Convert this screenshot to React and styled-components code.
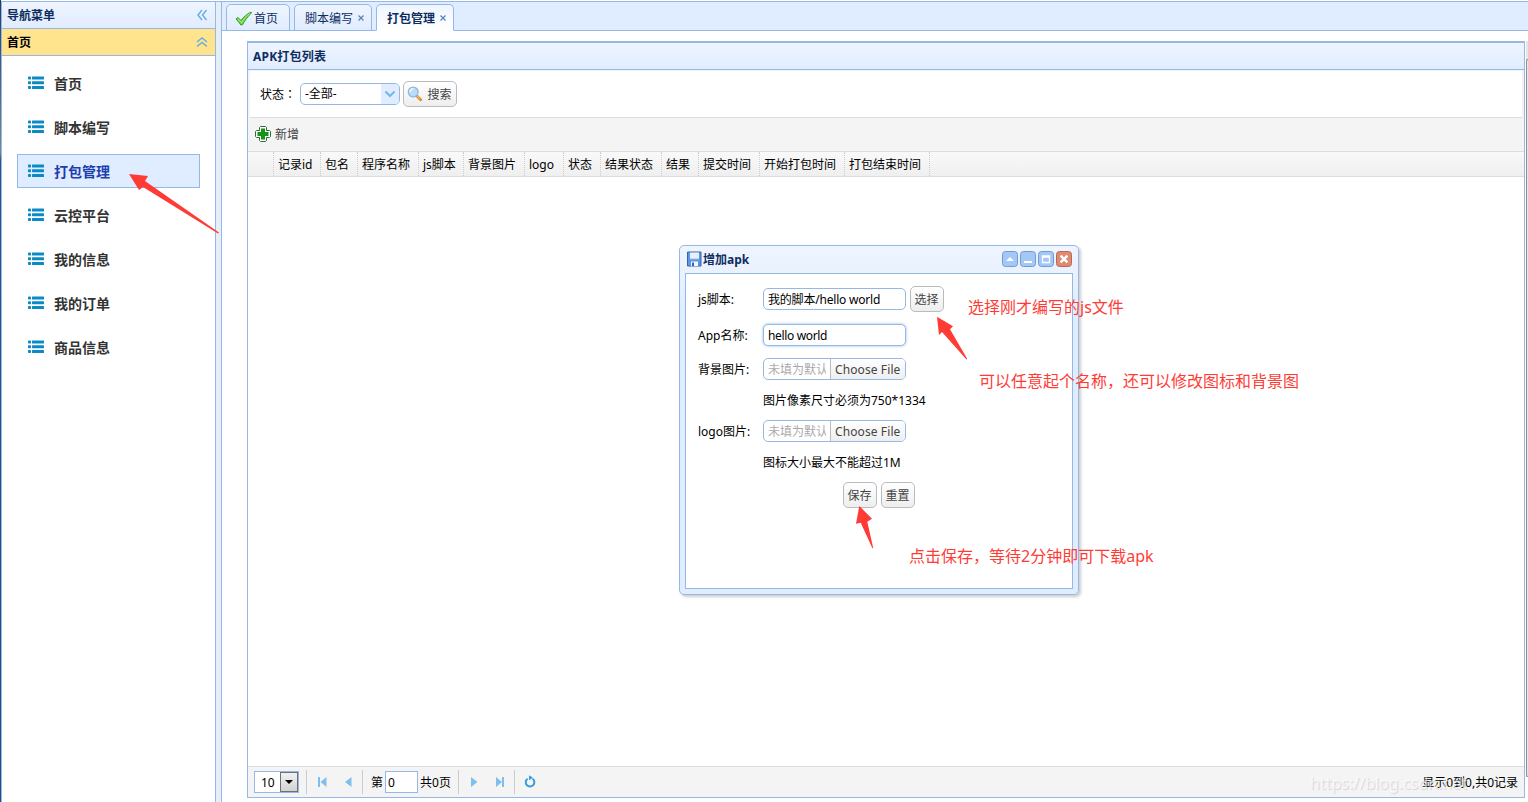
import React from 'react';
import styled, { createGlobalStyle, css } from 'styled-components';

const line = '#95b8e7';
const navy = '#0e2d5f';

const GlobalStyle = createGlobalStyle`
  * {
    box-sizing: border-box;
  }

  body {
    margin: 0;
    overflow: hidden;
    background: #fff;
  }

  body,
  input,
  button,
  select {
    font-family: 'Noto Sans', 'Noto Sans CJK SC', sans-serif;
    font-size: 12px;
    line-height: 16px;
    color: #000;
  }
`;

const Page = styled.div`
  position: relative;
  width: 1528px;
  height: 802px;
  padding-top: 1px;
  display: flex;
  overflow: hidden;
  white-space: nowrap;
`;

const DesktopEdge = styled.div`
  width: 1px;
  margin-top: -1px;
  background: linear-gradient(#1f3e63, #7d8791 19%, #2d5580 20%, #274d78);
`;

const Sidebar = styled.nav`
  width: 215px;
  border: 1px solid ${line};
  border-bottom: 0;
`;

const BarHeader = styled.div`
  display: flex;
  align-items: center;
  justify-content: space-between;
  height: 27px;
  padding: 1px 7px 0 5px;
  font-weight: bold;
  color: ${({ $active }) => ($active ? '#000' : navy)};
  background: ${({ $active }) => ($active ? '#ffe48d' : 'linear-gradient(#eff5ff, #e0ecff)')};
  border-bottom: 1px solid ${line};

  svg {
    margin-top: -1px;
  }
`;

const Menu = styled.ul`
  margin: 0;
  padding: 10px 15px;
  list-style: none;
  display: grid;
  gap: 10px;
`;

const MenuItem = styled.li`
  display: flex;
  align-items: center;
  gap: 10px;
  height: 34px;
  padding: 1px 0 0 10px;
  border: 1px solid transparent;
  font-size: 14px;
  font-weight: bold;
  color: #333;

  ${({ $active }) =>
    $active &&
    css`
      color: #1b3fae;
      background: #e0ecff;
      border-color: ${line};
    `}

  svg {
    margin-top: -1px;
  }
`;

const Splitter = styled.div`
  width: 5px;
  background: #e6eef8;
  border-top: 1px solid ${line};
`;

const Center = styled.main`
  flex: 1;
  display: flex;
  flex-direction: column;
  border: solid ${line};
  border-width: 1px 0 0 1px;
`;

const TabBar = styled.div`
  display: flex;
  gap: 4px;
  height: 29px;
  padding: 2px 0 0 4px;
  background: #e0ecff;
  border-bottom: 1px solid ${line};
`;

const Tab = styled.div`
  display: flex;
  align-items: center;
  gap: 1px;
  width: ${({ $width }) => $width}px;
  height: 27px;
  padding: 2px 0 0 ${({ $icon }) => ($icon ? 8 : 10)}px;
  border: 1px solid ${line};
  border-radius: 5px 5px 0 0;
  color: ${navy};
  background: linear-gradient(#eff5ff, #e0ecff);

  ${({ $active }) =>
    $active &&
    css`
      font-weight: bold;
      border-bottom-color: #fff;
      background: linear-gradient(#eff5ff, #fff);
    `}
`;

const TabClose = styled.svg`
  margin: -1px 0 0 4px;
`;

const Workspace = styled.div`
  flex: 1;
  display: flex;
  padding: 10px 0 4px 25px;
`;

const Panel = styled.section`
  flex: 1;
  display: flex;
  flex-direction: column;
  border: 1px solid ${line};
  border-top-width: 2px;
`;

const PanelTitle = styled.header`
  height: 27px;
  padding: 6px 5px;
  font-weight: bold;
  letter-spacing: 0.2px;
  color: ${navy};
  background: linear-gradient(#eff5ff, #e0ecff);
  border-bottom: 1px solid ${line};
`;

const SearchBar = styled.div`
  display: flex;
  align-items: center;
  height: 48px;
  padding: 0 0 1px 10px;
  border: solid #f3f3f3;
  border-width: 1px 2px 0 2px;
  box-shadow: inset 0 -1px #ddd;
`;

const SearchLabel = styled.span`
  width: 40px;
  padding-top: 1px;
  font-family: 'Noto Sans', 'Noto Sans CJK TC', sans-serif;
`;

const Combo = styled.div`
  display: flex;
  align-items: center;
  justify-content: space-between;
  width: 100px;
  height: 22px;
  margin-right: 3px;
  padding-left: 4px;
  border: 1px solid ${line};
  border-radius: 5px;
  overflow: hidden;
`;

const ComboArrow = styled.span`
  display: grid;
  place-items: center;
  width: 18px;
  height: 20px;
  background: #e0ecff;
`;

const Button = styled.button`
  display: flex;
  align-items: center;
  justify-content: center;
  gap: 4px;
  width: ${({ $width = 34 }) => $width}px;
  height: 26px;
  padding: 1px 1px 0 0;
  color: #444;
  background: linear-gradient(#fff, #eee);
  border: 1px solid #bbb;
  border-radius: 5px;

  svg {
    margin-top: -2px;
  }
`;

const Toolbar = styled.div`
  display: flex;
  align-items: center;
  gap: 4px;
  height: 34px;
  padding: 0 7px;
  color: #444;
  background: #f4f4f4;
  border-bottom: 1px solid #ddd;

  svg {
    margin-top: -1px;
  }
`;

const GridHead = styled.div`
  display: flex;
  height: 25px;
  background: linear-gradient(#f9f9f9, #efefef);
  border-bottom: 1px solid #ddd;
`;

const HeadCell = styled.div`
  width: ${({ $width }) => $width}px;
  padding: 5px 0 0 4px;
  border-right: 1px dotted #ccc;
`;

const GridBody = styled.div`
  flex: 1;
`;

const Pager = styled.footer`
  display: flex;
  align-items: center;
  height: 31px;
  padding: 0 6px;
  background: #f4f4f4;
  border-top: 1px solid #ddd;
`;

const PagerText = styled.span`
  padding-top: 2px;
`;

const PageSize = styled.div`
  display: flex;
  width: 45px;
  height: 22px;
  padding-left: 6px;
  line-height: 22px;
  border: 1px solid ${line};
  background: #fff;
`;

const PageSizeArrow = styled.span`
  display: grid;
  place-items: center;
  width: 18px;
  height: 20px;
  margin-left: auto;
  background: linear-gradient(#f2f2f2, #d2d2d2);
  border: 1px solid #707070;
`;

const Separator = styled.i`
  width: 1px;
  height: 24px;
  margin: 0 ${({ $right = 7 }) => $right}px 0 ${({ $left = 7 }) => $left}px;
  background: #ccc;
`;

const PageIcon = styled.svg`
  margin: 0 5px;
`;

const PageInput = styled.input`
  width: 33px;
  height: 22px;
  margin: 0 2px;
  padding: 1px 2px 0;
  border: 1px solid ${line};
`;

const Summary = styled(PagerText)`
  margin-left: auto;
`;

const ScrollEdge = styled.div`
  width: 3px;
  margin-bottom: 21px;
  padding-top: 18px;
  background: linear-gradient(90deg, #fff 1px, #e6e6e6 1px);
`;

const ScrollThumb = styled.div`
  height: 100%;
  margin-left: 1px;
  border: solid #8f8f8f;
  border-width: 1px 0 1px 1px;
  border-radius: 2px 0 0 2px;
`;

const Dialog = styled.section`
  position: absolute;
  left: 679px;
  top: 245px;
  width: 400px;
  height: 350px;
  padding: 5px;
  display: flex;
  flex-direction: column;
  background: linear-gradient(#eff5ff, #e0ecff 20%);
  border: 1px solid ${line};
  border-radius: 5px;
  box-shadow: 2px 2px 3px #ccc;
`;

const DialogTitle = styled.header`
  display: flex;
  align-items: center;
  gap: 2px;
  height: 22px;
  padding: 0 1px 6px 2px;
  font-weight: bold;
  color: ${navy};

  span {
    flex: 1;
    margin: 2px 0 0 -1px;
  }
`;

const DialogBody = styled.div`
  flex: 1;
  padding: 12px;
  border: 1px solid ${line};
  background: #fff;
`;

const FormRow = styled.div`
  display: flex;
  align-items: center;
  height: ${({ $height }) => $height}px;
`;

const FormLabel = styled.label`
  width: 65px;
  padding-top: 2px;
`;

const TextInput = styled.input`
  width: 143px;
  height: 22px;
  margin-right: 4px;
  padding: 0 4px;
  letter-spacing: ${({ $focused }) => ($focused ? -0.35 : -0.2)}px;
  border: 1px solid ${line};
  border-radius: 5px;
  box-shadow: ${({ $focused }) => ($focused ? `0 0 3px ${line}` : 'none')};
`;

const FileBox = styled.div`
  display: flex;
  width: 143px;
  height: 22px;
  line-height: 21px;
  border: 1px solid ${line};
  border-radius: 5px;
  overflow: hidden;
`;

const FilePlaceholder = styled.span`
  width: 62px;
  margin-right: 4px;
  padding-left: 4px;
  overflow: hidden;
  color: #aaa;
`;

const FileButton = styled.span`
  flex: 1;
  padding-left: 4px;
  letter-spacing: 0.1px;
  color: #444;
  background: linear-gradient(#fff, #eee);
  border-left: 1px solid #bbb;
`;

const Hint = styled.span`
  margin-left: 65px;
  padding-top: ${({ $offset = 2 }) => $offset}px;
`;

const Actions = styled.div`
  display: flex;
  gap: 4px;
  margin: 4px 0 0 145px;
`;

const Note = styled.span`
  position: absolute;
  left: ${({ $x }) => $x}px;
  top: ${({ $y }) => $y}px;
  font-size: 16px;
  line-height: 20px;
  color: #ff3b36;
`;

const Arrows = styled.svg`
  position: absolute;
  inset: 0;
  pointer-events: none;
`;

const Watermark = styled.span`
  position: absolute;
  left: 1310px;
  top: 773px;
  font-size: 16px;
  line-height: 20px;
  color: rgba(255, 255, 255, 0.6);
  text-shadow: 1px 1px 1px rgba(0, 0, 0, 0.13);
`;

const ListIcon = () => (
  <svg width="16" height="14" viewBox="0 0 16 14" fill="#0a8ac6">
    {[0.5, 5.2, 10].map((y) => (
      <g key={y}>
        <rect x="0" y={y} width="3" height="3" rx="0.8" />
        <rect x="4" y={y} width="12" height="3" rx="0.6" />
      </g>
    ))}
  </svg>
);

const Chevrons = ({ up }) => (
  <svg width="12" height="12" viewBox="0 0 12 12" fill="none" stroke="#62aee2" strokeWidth="1.4">
    <path d={up ? 'M1 6l5-4 5 4M1 10.5l5-4 5 4' : 'M6 1L2 6l4 5M10.5 1l-4 5 4 5'} />
  </svg>
);

const CheckIcon = () => (
  <svg width="18" height="16" viewBox="0 0 18 16">
    <path
      d="M1 8l2-1.500 3 3C8.500 6 12 3 16 1l.5 1C12.500 5.500 9.500 10 7.500 13.800L5.900 14C4.500 12 3 10 1 8z"
      fill="#6bdc3d"
      stroke="#2f8f2a"
      strokeWidth="0.9"
    />
    <path d="M3 8l3.500 3.700C9 7.500 12 4.500 15 2.300" fill="none" stroke="#b5f58d" strokeWidth="0.8" />
  </svg>
);

const SearchIcon = () => (
  <svg width="16" height="16" viewBox="0 0 16 16">
    <path d="M9.500 9.500l4.200 4.200" stroke="#d98a2b" strokeWidth="2.800" strokeLinecap="round" />
    <path d="M9.800 9.500l3.500 3.400" stroke="#ffd27a" strokeWidth="1" />
    <circle cx="6.200" cy="6" r="4.900" fill="#b9dcfb" stroke="#93b5d8" strokeWidth="1.300" />
    <path d="M3 6a3.200 3.200 0 0 1 3.300-3.200" fill="none" stroke="#f3faff" strokeWidth="1.500" />
  </svg>
);

const AddIcon = () => (
  <svg width="16" height="16" viewBox="0 0 16 16">
    <path
      d="M5.500.5h5l1 1v3h3l1 1v5l-1 1h-3v3l-1 1h-5l-1-1v-3h-3l-1-1v-5l1-1h3v-3z"
      fill="#fff"
      stroke="#2c6e35"
    />
    <path d="M6 2.500h4V6h3.500v4H10v3.500H6V10H2.500V6H6z" fill="#139413" />
  </svg>
);

const SaveIcon = () => (
  <svg width="15" height="16" viewBox="0 0 15 16">
    <path d="M.5 1h13.500v14H.5z" fill="#5e95e6" stroke="#3464ae" />
    <path d="M3 1.500h9V8H3z" fill="#e8f1fb" />
    <path d="M3 8h9" stroke="#9bbbe6" />
    <path d="M4 10.500h7V15H4z" fill="#f4f7fb" />
    <path d="M5 11.500h2V15H5z" fill="#3464ae" />
  </svg>
);

const toolShapes = {
  collapse: <path d="M4 10l4-4 4 4z" fill="#fff" />,
  minimize: <path d="M4 10h8v2H4z" fill="#fff" />,
  maximize: <path d="M4.500 5h7v6.500h-7zM4.500 6h7" fill="none" stroke="#fff" strokeWidth="1.300" />,
  close: <path d="M4.600 4.600l6.800 6.800M11.400 4.600l-6.800 6.800" stroke="#fff" strokeWidth="2.400" />,
};

const WindowTool = ({ type }) => (
  <svg width="16" height="16" viewBox="0 0 16 16">
    <rect
      x="0.500"
      y="0.500"
      width="15"
      height="15"
      rx="3"
      fill={type === 'close' ? '#dd8a70' : '#a4c8f5'}
      stroke={type === 'close' ? '#bd6650' : '#6c9bd6'}
    />
    {toolShapes[type]}
  </svg>
);

const pageShapes = {
  first: 'M4 3h2v10H4zM12.500 3v10L6.500 8z',
  prev: 'M11.500 3v10L5 8z',
  next: 'M6 3v10l6.500-5z',
  last: 'M5 3v10l6-5zM11 3h2v10h-2z',
};

const PageButton = ({ type }) => (
  <PageIcon width="16" height="16" viewBox="0 0 16 16" fill="#7fbfec">
    <path d={pageShapes[type]} />
  </PageIcon>
);

const menu = ['首页', '脚本编写', '打包管理', '云控平台', '我的信息', '我的订单', '商品信息'];

const tabs = [
  { title: '首页', width: 64, icon: true },
  { title: '脚本编写', width: 78 },
  { title: '打包管理', width: 78, active: true },
];

const columns = [
  ['', 26],
  ['记录id', 47],
  ['包名', 37],
  ['程序名称', 61],
  ['js脚本', 45],
  ['背景图片', 61],
  ['logo', 39],
  ['状态', 37],
  ['结果状态', 61],
  ['结果', 37],
  ['提交时间', 61],
  ['开始打包时间', 85],
  ['打包结束时间', 85],
];

const FileField = () => (
  <FileBox>
    <FilePlaceholder>未填为默认</FilePlaceholder>
    <FileButton>Choose File</FileButton>
  </FileBox>
);

const AddDialog = () => (
  <Dialog>
    <DialogTitle>
      <SaveIcon />
      <span>增加apk</span>
      <WindowTool type="collapse" />
      <WindowTool type="minimize" />
      <WindowTool type="maximize" />
      <WindowTool type="close" />
    </DialogTitle>
    <DialogBody>
      <FormRow $height={26}>
        <FormLabel>js脚本:</FormLabel>
        <TextInput defaultValue="我的脚本/hello world" />
        <Button>选择</Button>
      </FormRow>
      <FormRow $height={46}>
        <FormLabel>App名称:</FormLabel>
        <TextInput $focused defaultValue="hello world" />
      </FormRow>
      <FormRow $height={22}>
        <FormLabel>背景图片:</FormLabel>
        <FileField />
      </FormRow>
      <FormRow $height={40}>
        <Hint>图片像素尺寸必须为750*1334</Hint>
      </FormRow>
      <FormRow $height={22}>
        <FormLabel>logo图片:</FormLabel>
        <FileField />
      </FormRow>
      <FormRow $height={36}>
        <Hint $offset={6}>图标大小最大不能超过1M</Hint>
      </FormRow>
      <Actions>
        <Button>保存</Button>
        <Button>重置</Button>
      </Actions>
    </DialogBody>
  </Dialog>
);

function App() {
  return (
    <Page>
      <GlobalStyle />
      <DesktopEdge />
      <Sidebar>
        <BarHeader>
          导航菜单
          <Chevrons />
        </BarHeader>
        <BarHeader $active>
          首页
          <Chevrons up />
        </BarHeader>
        <Menu>
          {menu.map((title) => (
            <MenuItem key={title} $active={title === '打包管理'}>
              <ListIcon />
              {title}
            </MenuItem>
          ))}
        </Menu>
      </Sidebar>
      <Splitter />
      <Center>
        <TabBar>
          {tabs.map(({ title, width, icon, active }) => (
            <Tab key={title} $width={width} $icon={icon} $active={active}>
              {icon && <CheckIcon />}
              {title}
              {!icon && (
                <TabClose width="6" height="6" viewBox="0 0 6 6" stroke="#5b7fb8" strokeWidth="1.200">
                  <path d="M.5.5l5 5M5.500.5l-5 5" />
                </TabClose>
              )}
            </Tab>
          ))}
        </TabBar>
        <Workspace>
          <Panel>
            <PanelTitle>APK打包列表</PanelTitle>
            <SearchBar>
              <SearchLabel>状态：</SearchLabel>
              <Combo>
                -全部-
                <ComboArrow>
                  <svg width="12" height="8" viewBox="0 0 12 8" fill="none" stroke="#70b8ea" strokeWidth="2">
                    <path d="M1.500 1.500L6 6l4.500-4.500" />
                  </svg>
                </ComboArrow>
              </Combo>
              <Button $width={54}>
                <SearchIcon />
                搜索
              </Button>
            </SearchBar>
            <Toolbar>
              <AddIcon />
              新增
            </Toolbar>
            <GridHead>
              {columns.map(([title, width]) => (
                <HeadCell key={title} $width={width}>
                  {title}
                </HeadCell>
              ))}
            </GridHead>
            <GridBody />
            <Pager>
              <PageSize>
                10
                <PageSizeArrow>
                  <svg width="8" height="4" viewBox="0 0 8 4">
                    <path d="M0 0h8L4 4z" />
                  </svg>
                </PageSizeArrow>
              </PageSize>
              <Separator $right={2} />
              <PageButton type="first" />
              <PageButton type="prev" />
              <Separator $left={1} $right={8} />
              <PagerText>第</PagerText>
              <PageInput defaultValue="0" />
              <PagerText>共0页</PagerText>
              <Separator $right={1} />
              <PageButton type="next" />
              <PageButton type="last" />
              <Separator $left={2} $right={2} />
              <PageIcon width="16" height="16" viewBox="0 0 16 16" fill="none" stroke="#349edb" strokeWidth="2">
                <path d="M5.600 4.700A4.300 4.300 0 1 0 10.500 4.700" />
                <path d="M7 1.200v5l4-2.500z" fill="#349edb" stroke="none" />
              </PageIcon>
              <Summary>显示0到0,共0记录</Summary>
            </Pager>
          </Panel>
          <ScrollEdge>
            <ScrollThumb />
          </ScrollEdge>
        </Workspace>
      </Center>

      <AddDialog />

      <Arrows width="1528" height="802" fill="#ff3b36">
        <path d="M129 174l19 2-3 5 74 51.500-1 1L143 187l-4 3z" />
        <path d="M937 316.700l16 9.600-3 3 17.300 29.700-.8.5L942 332l-3 3z" />
        <path d="M859.300 506l12.700 12.700-4.700 3 5.900 26.300-.8.300-11.700-25.600-4.700 1z" />
      </Arrows>
      <Note $x={968} $y={297}>选择刚才编写的js文件</Note>
      <Note $x={979} $y={371}>可以任意起个名称，还可以修改图标和背景图</Note>
      <Note $x={909} $y={546}>点击保存，等待2分钟即可下载apk</Note>
      <Watermark>https://blog.csdn.net</Watermark>
    </Page>
  );
}

export default App;
